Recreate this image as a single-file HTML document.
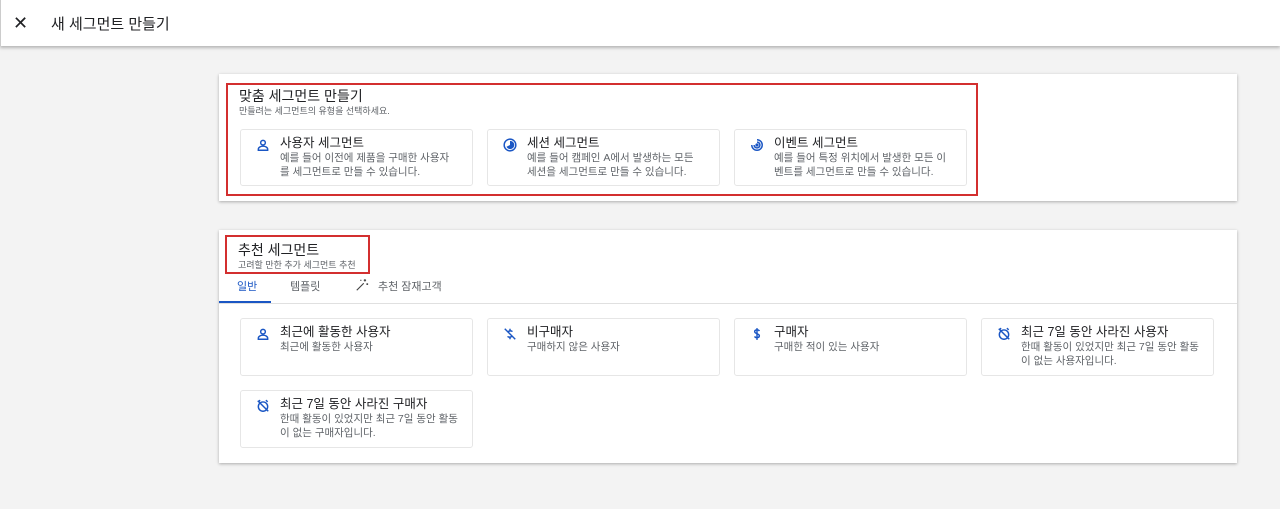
<!DOCTYPE html>
<html><head><meta charset="utf-8"><style>
*{box-sizing:border-box;margin:0;padding:0}
body{width:1280px;height:509px;background:#f3f3f3;font-family:"Liberation Sans","Noto Sans CJK KR",sans-serif;position:relative;overflow:hidden;color:#202124}
.hdr{position:absolute;left:0;top:0;width:1280px;height:46px;background:#fff;box-shadow:0 2px 3px rgba(0,0,0,.25);border-left:1px solid #ccc}
.hdr .x{position:absolute;left:12px;top:13px;font-size:18px}
.hdr .t{position:absolute;left:50px;top:13px;font-size:15px}
.panel{position:absolute;left:219px;width:1018px;background:#fff;box-shadow:0 1px 3px rgba(0,0,0,.3)}
.red{position:absolute;border:2px solid #d32f2f}
.h{position:absolute;font-size:14px}
.s{position:absolute;font-size:9px;color:#5f6368}
.card{position:absolute;width:233px;border:1px solid #e6e6e6;border-radius:3px;background:#fff}
.card svg{position:absolute;left:15px;top:8px}
.card .ct{position:absolute;left:39px;top:6px;font-size:12.5px;line-height:14px;color:#202124;white-space:nowrap}
.card .cd{position:absolute;left:39px;top:21px;font-size:10.5px;line-height:14px;color:#5f6368;width:178px;word-break:break-all}
.tab{position:absolute;top:278px;font-size:11px;color:#5f6368}
</style></head><body>
<div class="hdr"><div class="x">✕</div><div class="t">새 세그먼트 만들기</div></div>

<div class="panel" style="top:74px;height:127px"></div>
<div class="red" style="left:226px;top:83px;width:752px;height:113px"></div>
<div class="h" style="left:239px;top:86px">맞춤 세그먼트 만들기</div>
<div class="s" style="left:239px;top:104px">만들려는 세그먼트의 유형을 선택하세요.</div>

<div class="card" style="left:240px;top:129px;height:57px">
<svg width="14" height="14" viewBox="0 0 24 24" fill="none" stroke="#1a56c4" stroke-width="2.5"><circle cx="12" cy="8" r="4"/><path d="M4 21v-2c0-3 4-5 8-5s8 2 8 5v2z"/></svg>
<div class="ct">사용자 세그먼트</div><div class="cd">예를 들어 이전에 제품을 구매한 사용자를 세그먼트로 만들 수 있습니다.</div></div>
<div class="card" style="left:487px;top:129px;height:57px">
<svg width="14" height="14" viewBox="0 0 24 24"><circle cx="12" cy="12" r="10" fill="none" stroke="#1a56c4" stroke-width="2.5"/><path d="M12 5a7 7 0 1 1-6 10l6-3z" fill="#1a56c4"/></svg>
<div class="ct">세션 세그먼트</div><div class="cd">예를 들어 캠페인 A에서 발생하는 모든 세션을 세그먼트로 만들 수 있습니다.</div></div>
<div class="card" style="left:734px;top:129px;height:57px">
<svg width="14" height="14" viewBox="0 0 24 24" fill="none" stroke="#1a56c4" stroke-width="2.5"><path d="M12 3a9 9 0 1 1-9 9"/><path d="M12 7a5 5 0 1 1-5 5"/><circle cx="12" cy="12" r="1.5" fill="#1a56c4"/></svg>
<div class="ct">이벤트 세그먼트</div><div class="cd">예를 들어 특정 위치에서 발생한 모든 이벤트를 세그먼트로 만들 수 있습니다.</div></div>

<div class="panel" style="top:230px;height:233px"></div>
<div class="red" style="left:225px;top:235px;width:145px;height:39px"></div>
<div class="h" style="left:238px;top:240px">추천 세그먼트</div>
<div class="s" style="left:238px;top:258px">고려할 만한 추가 세그먼트 추천</div>
<div class="tab" style="left:237px;color:#1a56c4">일반</div>
<div style="position:absolute;left:219px;top:301px;width:52px;height:2px;background:#1a56c4"></div>
<div style="position:absolute;left:219px;top:303px;width:1018px;height:1px;background:#e0e0e0"></div>
<div class="tab" style="left:290px">템플릿</div>
<svg style="position:absolute;left:355px;top:278px" width="14" height="14" viewBox="0 0 24 24" fill="none" stroke="#444" stroke-width="2"><path d="M3 21L15 9"/><path d="M17 2v4M15 4h4M21 9v3M19.5 10.5h3M10 3v2M9 4h2"/></svg>
<div class="tab" style="left:378px">추천 잠재고객</div>

<div class="card" style="left:240px;top:318px;height:58px">
<svg width="14" height="14" viewBox="0 0 24 24" fill="none" stroke="#1a56c4" stroke-width="2.5"><circle cx="12" cy="8" r="4"/><path d="M4 21v-2c0-3 4-5 8-5s8 2 8 5v2z"/></svg>
<div class="ct">최근에 활동한 사용자</div><div class="cd">최근에 활동한 사용자</div></div>
<div class="card" style="left:487px;top:318px;height:58px">
<svg width="14" height="14" viewBox="0 0 24 24" fill="none" stroke="#1a56c4" stroke-width="2.5"><path d="M3 3l18 18"/><path d="M12 3v3M12 18v3M16 8c-1-2-7-2-7 1M8 16c1 2 7 2 7-1"/></svg>
<div class="ct">비구매자</div><div class="cd">구매하지 않은 사용자</div></div>
<div class="card" style="left:734px;top:318px;height:58px">
<svg width="14" height="14" viewBox="0 0 24 24" fill="none" stroke="#1a56c4" stroke-width="2.5"><path d="M12 2v20M16 7c-1-3-8-3-8 1s8 3 8 7-7 4-8 1"/></svg>
<div class="ct">구매자</div><div class="cd">구매한 적이 있는 사용자</div></div>
<div class="card" style="left:981px;top:318px;height:58px">
<svg width="14" height="14" viewBox="0 0 24 24" fill="none" stroke="#1a56c4" stroke-width="2.5"><circle cx="12" cy="13" r="8"/><path d="M3 3l18 18M4 5l3-3M20 5l-3-3"/></svg>
<div class="ct">최근 7일 동안 사라진 사용자</div><div class="cd">한때 활동이 있었지만 최근 7일 동안 활동이 없는 사용자입니다.</div></div>
<div class="card" style="left:240px;top:390px;height:58px">
<svg width="14" height="14" viewBox="0 0 24 24" fill="none" stroke="#1a56c4" stroke-width="2.5"><circle cx="12" cy="13" r="8"/><path d="M3 3l18 18M4 5l3-3M20 5l-3-3"/></svg>
<div class="ct">최근 7일 동안 사라진 구매자</div><div class="cd">한때 활동이 있었지만 최근 7일 동안 활동이 없는 구매자입니다.</div></div>
</body></html>
